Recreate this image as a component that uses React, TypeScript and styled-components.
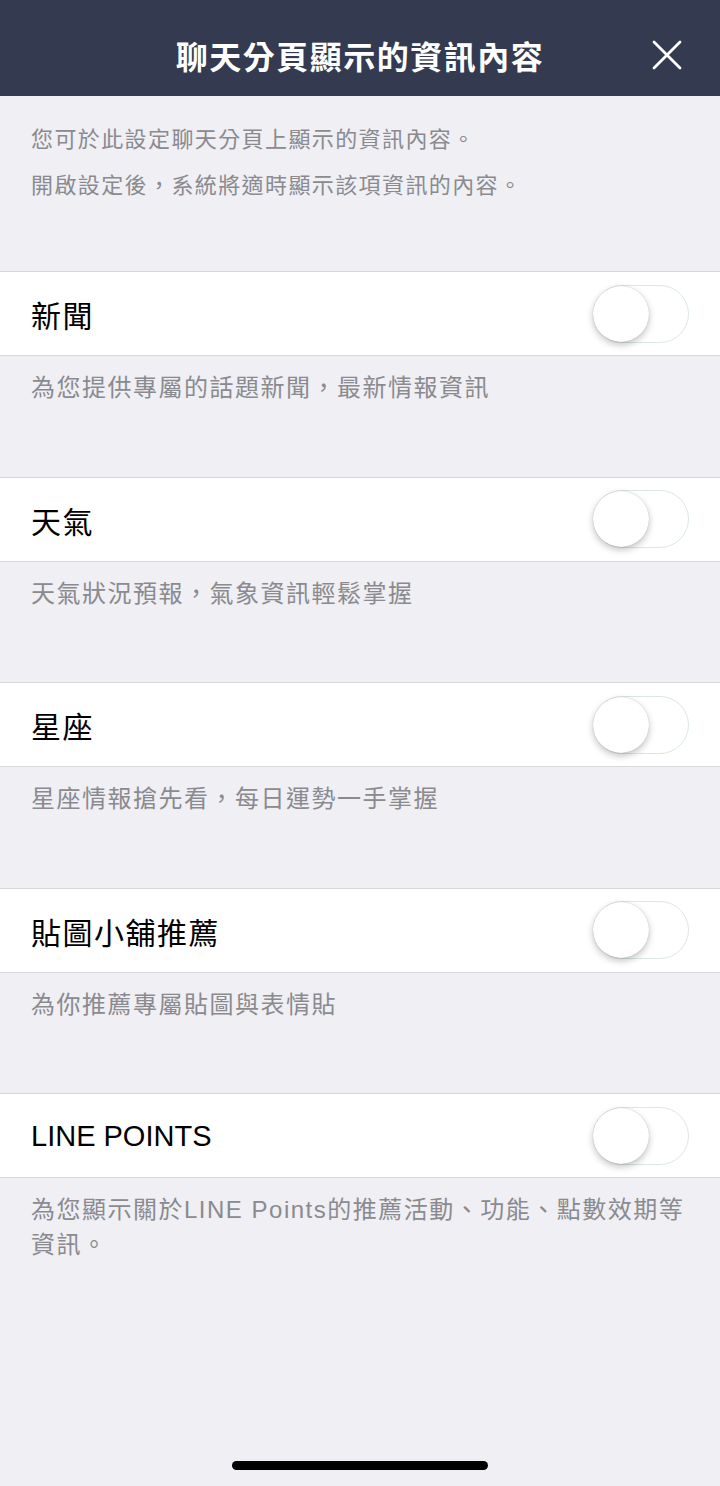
import styled, {createGlobalStyle} from 'styled-components'

const GlobalStyle = createGlobalStyle`
  html, body {
    margin: 0;
    padding: 0;
    background: #efeff4;
  }

  body {
    font-family: "Liberation Sans", "Noto Sans CJK TC", sans-serif;
    -webkit-font-smoothing: antialiased;
  }
`

interface Feature {
  title: string
  description: string
  latin?: boolean
}

const features: Feature[] = [
  {title: '新聞', description: '為您提供專屬的話題新聞，最新情報資訊'},
  {title: '天氣', description: '天氣狀況預報，氣象資訊輕鬆掌握'},
  {title: '星座', description: '星座情報搶先看，每日運勢一手掌握'},
  {title: '貼圖小舖推薦', description: '為你推薦專屬貼圖與表情貼'},
  {
    title: 'LINE POINTS',
    description: '為您顯示關於LINE Points的推薦活動、功能、點數效期等資訊。',
    latin: true,
  },
]

const CloseGlyph = () => (
  <svg viewBox="0 0 30 30" width="30" height="30" aria-hidden="true">
    <path d="M2 2 L28 28 M28 2 L2 28" stroke="#ffffff" strokeWidth="2.8" strokeLinecap="round" fill="none" />
  </svg>
)

export default function App() {
  return (
    <Page>
      <GlobalStyle />
      <Header>
        <HeaderTitle>聊天分頁顯示的資訊內容</HeaderTitle>
        <CloseButton type="button" aria-label="關閉">
          <CloseGlyph />
        </CloseButton>
      </Header>

      <Intro>
        <IntroLine>您可於此設定聊天分頁上顯示的資訊內容。</IntroLine>
        <IntroLine>開啟設定後，系統將適時顯示該項資訊的內容。</IntroLine>
      </Intro>

      {features.map((item) => (
        <Section key={item.title}>
          <Row>
            <RowTitle $latin={item.latin}>{item.title}</RowTitle>
            <Toggle role="switch" aria-checked={false} aria-label={item.title}>
              <Knob />
            </Toggle>
          </Row>
          <Description>{item.description}</Description>
        </Section>
      ))}

      <HomeBar />
    </Page>
  )
}

const Page = styled.div`
  display: flex;
  flex-direction: column;
  min-height: 1486px;
  background: #efeff4;
`

const Header = styled.header`
  display: grid;
  grid-template-columns: 1fr auto 1fr;
  align-items: center;
  height: 96px;
  padding: 14px 38px 0 0;
  box-sizing: border-box;
  background: #343a4f;
`

const HeaderTitle = styled.h1`
  grid-column: 2;
  margin: 0;
  padding-left: 38px;
  color: #ffffff;
  font-family: "Noto Sans CJK TC", sans-serif;
  font-size: 32px;
  font-weight: 700;
  letter-spacing: 1.5px;
  line-height: 1;
`

const CloseButton = styled.button`
  grid-column: 3;
  justify-self: end;
  display: grid;
  place-items: center;
  width: 30px;
  height: 30px;
  border: 0;
  padding: 0;
  background: transparent;
  cursor: pointer;
`

const Intro = styled.div`
  padding: 21px 31px 62px;
`

const IntroLine = styled.p`
  margin: 0;
  color: #8a8a8f;
  font-size: 22px;
  line-height: 46px;
  letter-spacing: 1.4px;
`

const Section = styled.section`
  display: flex;
  flex-direction: column;
`

const Row = styled.div`
  display: flex;
  align-items: center;
  justify-content: space-between;
  height: 85px;
  padding: 0 31px;
  box-sizing: border-box;
  border-top: 1.5px solid #d8d8dc;
  border-bottom: 1.5px solid #d8d8dc;
  background: #ffffff;
`

const RowTitle = styled.span<{$latin?: boolean}>`
  padding-top: 1px;
  color: #000000;
  font-size: ${(p) => (p.$latin ? '29px' : '30px')};
  letter-spacing: ${(p) => (p.$latin ? '0' : '1.5px')};
`

const Toggle = styled.div`
  display: flex;
  align-items: center;
  width: 96px;
  height: 58px;
  box-sizing: border-box;
  border: 1.5px solid #dce8df;
  border-radius: 29px;
  background: #ffffff;
`

const Knob = styled.span`
  width: 56px;
  height: 56px;
  margin-left: -1px;
  border-radius: 50%;
  background: #ffffff;
  box-shadow: 0 3px 7px rgba(0, 0, 0, 0.24), 0 0 1px rgba(0, 0, 0, 0.25);
`

const Description = styled.p`
  margin: 0;
  min-height: 120.5px;
  padding: 14px 28px 0 31px;
  box-sizing: border-box;
  color: #8a8a8f;
  font-size: 24px;
  line-height: 35px;
  letter-spacing: 1.5px;
`

const HomeBar = styled.div`
  align-self: center;
  width: 256px;
  height: 9px;
  margin: auto 0 16px;
  border-radius: 5px;
  background: #000000;
`
